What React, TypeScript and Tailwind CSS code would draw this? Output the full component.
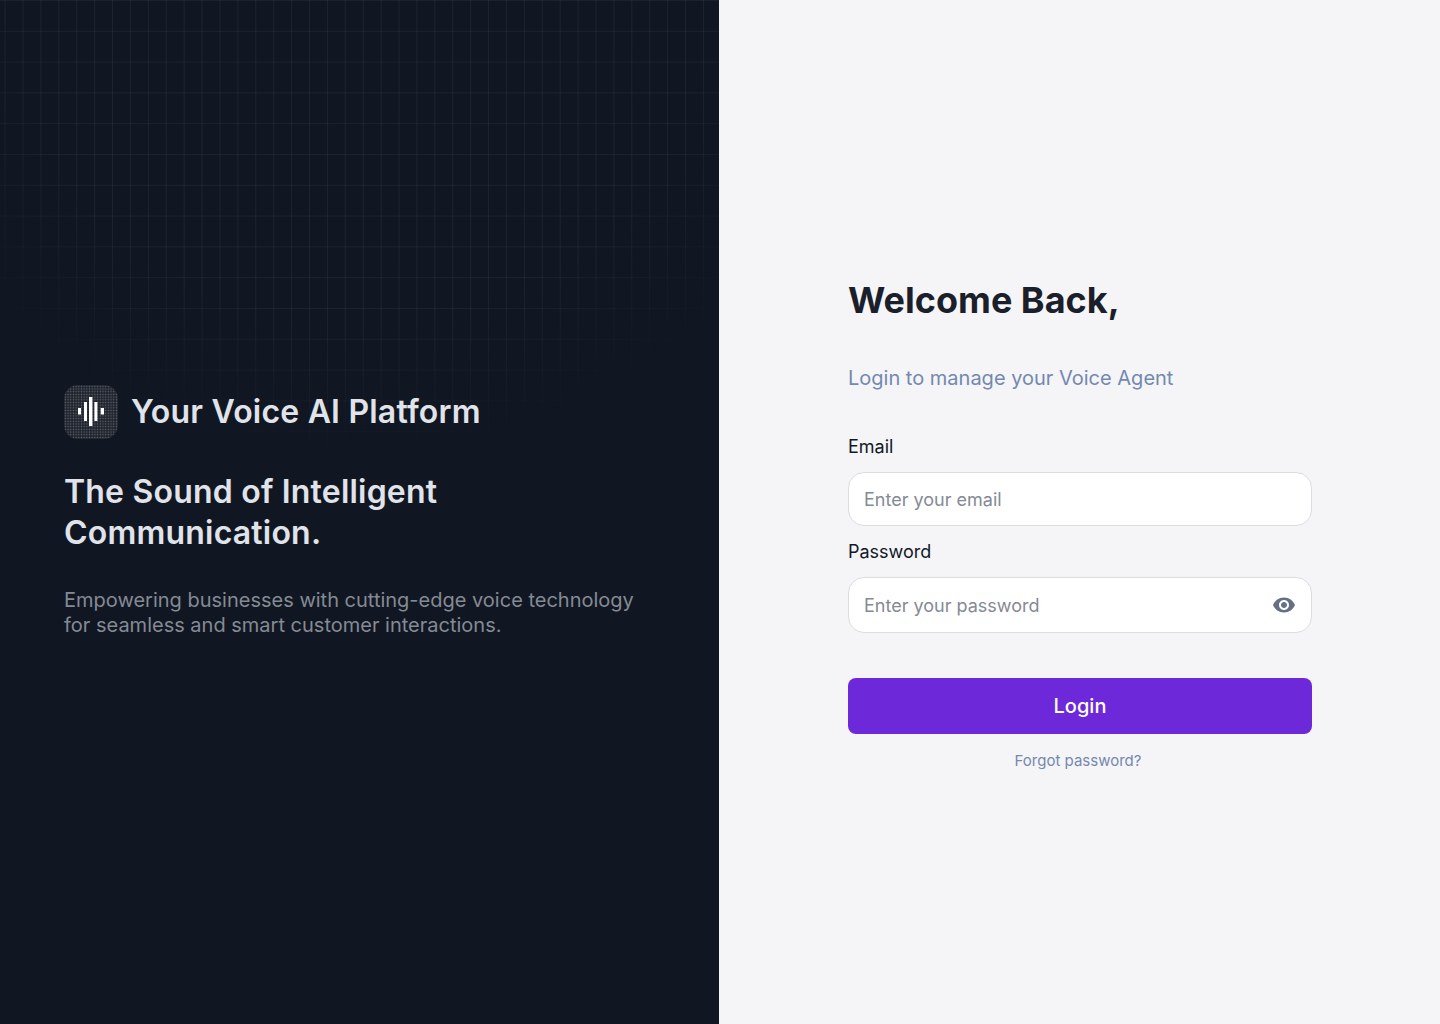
import React from "react";

export default function App() {
  return (
    <div className="flex h-[1024px] w-[1440px] overflow-hidden font-['Inter',sans-serif]">
      <div className="relative flex w-[719px] shrink-0 flex-col bg-[#101722] pl-16 pr-20 pt-[385px]">
        <div className="pointer-events-none absolute inset-0 bg-[linear-gradient(to_right,rgba(255,245,245,0.06)_1px,transparent_1px),linear-gradient(to_bottom,rgba(255,245,245,0.05)_1px,transparent_1px)] bg-[size:17.92px_30.8px] bg-[position:4.6px_0px] [mask-image:radial-gradient(ellipse_510px_470px_at_50%_0%,black_68%,transparent_100%)]" />
        <div className="relative flex items-center gap-[13px]">
          <div className="flex h-[54px] w-[54px] items-center justify-center rounded-[14px] bg-[#1e232d] bg-[radial-gradient(rgba(255,255,255,0.3)_0.75px,transparent_0.95px)] bg-[size:2.7px_2.7px]">
            <svg width="28" height="30" viewBox="0 0 28 30" fill="#ffffff">
              <rect x="1" y="11" width="3" height="6.5" />
              <rect x="7" y="5" width="3" height="19" />
              <rect x="12" y="0" width="3.4" height="29" />
              <rect x="17.4" y="5" width="3" height="19" />
              <rect x="23.7" y="11" width="3.3" height="6.5" />
            </svg>
          </div>
          <div className="text-[32px] font-semibold leading-[54px] tracking-[0.2px] text-[#e0e3e9]">Your Voice AI Platform</div>
        </div>
        <div className="relative mt-[32px] text-[32px] font-semibold leading-[41px] tracking-[0.2px] text-[#e0e3e9]">
          The Sound of Intelligent
          <br />
          Communication.
        </div>
        <p className="relative mt-[35px] text-xl leading-[25px] text-[#858a94]">
          Empowering businesses with cutting-edge voice technology for seamless and smart customer interactions.
        </p>
      </div>
      <div className="flex flex-1 flex-col bg-[#f5f5f7] pl-[129px] pr-[128px] pt-[277px]">
        <h1 className="text-[36px] font-bold leading-[46px] text-[#1a1f2b]">Welcome Back,</h1>
        <p className="mt-[41px] text-xl leading-[28px] text-[#7488b0]">Login to manage your Voice Agent</p>
        <label className="mt-[41px] text-lg leading-[28px] text-[#111827]">Email</label>
        <div className="mt-[11px] flex h-[54px] items-center rounded-2xl border border-[#dcdce2] bg-white px-[15px] pt-0.5 text-lg text-[#858a94]">
          Enter your email
        </div>
        <label className="mt-[12px] text-lg leading-[28px] text-[#111827]">Password</label>
        <div className="mt-[11px] flex h-[56px] items-center justify-between rounded-2xl border border-[#dcdce2] bg-white px-[15px] text-lg text-[#858a94]">
          <span className="pt-0.5">Enter your password</span>
          <svg width="24" height="24" viewBox="0 0 24 24" fill="#667085">
            <path d="M12 4.5C7 4.5 2.73 7.61 1 12c1.73 4.39 6 7.5 11 7.5s9.27-3.11 11-7.5c-1.73-4.39-6-7.5-11-7.5zM12 17c-2.76 0-5-2.24-5-5s2.24-5 5-5 5 2.24 5 5-2.24 5-5 5zm0-8c-1.66 0-3 1.34-3 3s1.34 3 3 3 3-1.34 3-3-1.34-3-3-3z" />
          </svg>
        </div>
        <button className="mt-[45px] h-14 rounded-lg bg-[#6d28d9] text-xl font-medium text-white">Login</button>
        <div className="mt-[17px] pr-1 text-center text-[15px] leading-[20px] text-[#7488b0]">Forgot password?</div>
      </div>
    </div>
  );
}
